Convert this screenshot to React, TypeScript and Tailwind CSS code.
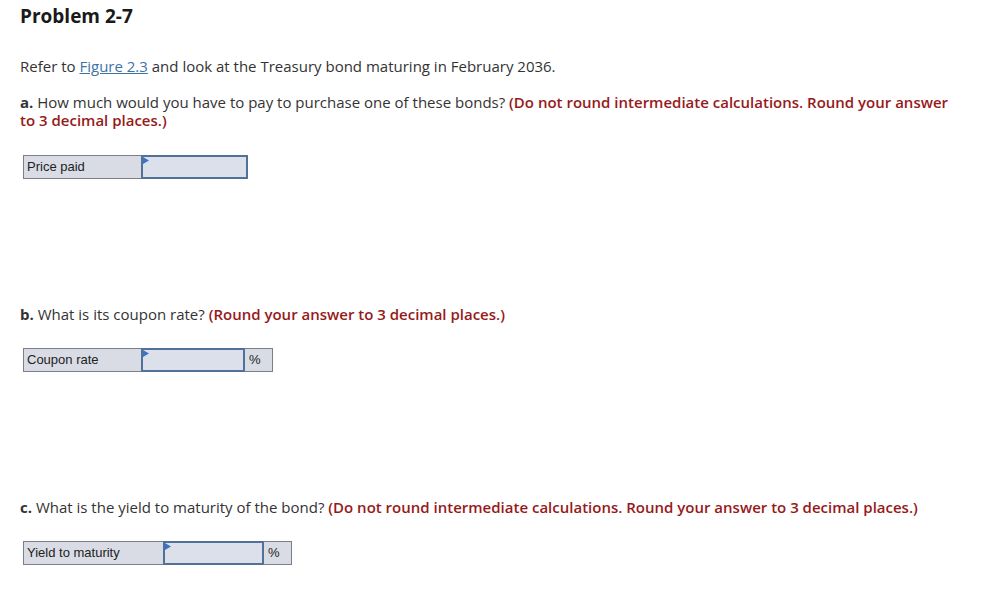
import * as React from 'react';

const body = "font-['Open_Sans','Lato',sans-serif]";
const cell = "font-['Liberation_Sans',Arial,sans-serif] text-[13px] text-[#222]";
const hint = 'font-semibold text-[#961a1a]';

function Flag() {
  return (
    <svg className="absolute left-0 top-0" width="6" height="8" viewBox="0 0 6 8">
      <path d="M0 0 L6 3.5 L0 7 Z" fill="#3b74c4" />
    </svg>
  );
}

interface AnswerRowProps {
  label: string;
  labelWidth: string;
  inputWidth: string;
  percent?: boolean;
}

function AnswerRow({ label, labelWidth, inputWidth, percent }: AnswerRowProps) {
  return (
    <div className="flex h-[24px] ml-[3px]">
      <div
        className={`${labelWidth} ${cell} h-full bg-[#d9dce5] border border-[#7b7e86] border-r-0 flex items-center pl-[3px]`}
      >
        {label}
      </div>
      <div className={`${inputWidth} relative h-full bg-[#dce0ea] border-2 border-[#52719a]`}>
        <Flag />
      </div>
      {percent && (
        <div className={`w-[28px] ${cell} h-full bg-[#d9dce5] border border-[#7b7e86] border-l-0 flex items-center pl-[4px]`}>
          %
        </div>
      )}
    </div>
  );
}

export default function App() {
  return (
    <div className={`${body} bg-white w-[1003px] h-[616px] px-[20px] pt-[4px] text-[#333] text-[15px]`}>
      <h1 className="text-[19px] font-bold text-[#1a1a1a] leading-[24px]">Problem 2-7</h1>

      <p className="mt-[29px] leading-[18px]">
        Refer to <span className="text-[#3e73a5] underline">Figure 2.3</span> and look at the Treasury bond maturing in
        February 2036.
      </p>

      <p className="mt-[18px] leading-[18px] w-[940px]">
        <span className="font-bold">a.</span> How much would you have to pay to purchase one of these bonds?{' '}
        <span className={hint}>
          (Do not round intermediate calculations. Round your answer to 3 decimal places.)
        </span>
      </p>

      <div className="mt-[26px]">
        <AnswerRow label="Price paid" labelWidth="w-[118px]" inputWidth="w-[107px]" />
      </div>

      <p className="mt-[126px] leading-[18px]">
        <span className="font-bold">b.</span> What is its coupon rate?{' '}
        <span className={hint}>(Round your answer to 3 decimal places.)</span>
      </p>

      <div className="mt-[25px]">
        <AnswerRow label="Coupon rate" labelWidth="w-[118px]" inputWidth="w-[104px]" percent />
      </div>

      <p className="mt-[126px] leading-[18px]">
        <span className="font-bold">c.</span> What is the yield to maturity of the bond?{' '}
        <span className={hint}>
          (Do not round intermediate calculations. Round your answer to 3 decimal places.)
        </span>
      </p>

      <div className="mt-[25px]">
        <AnswerRow label="Yield to maturity" labelWidth="w-[140px]" inputWidth="w-[101px]" percent />
      </div>
    </div>
  );
}
